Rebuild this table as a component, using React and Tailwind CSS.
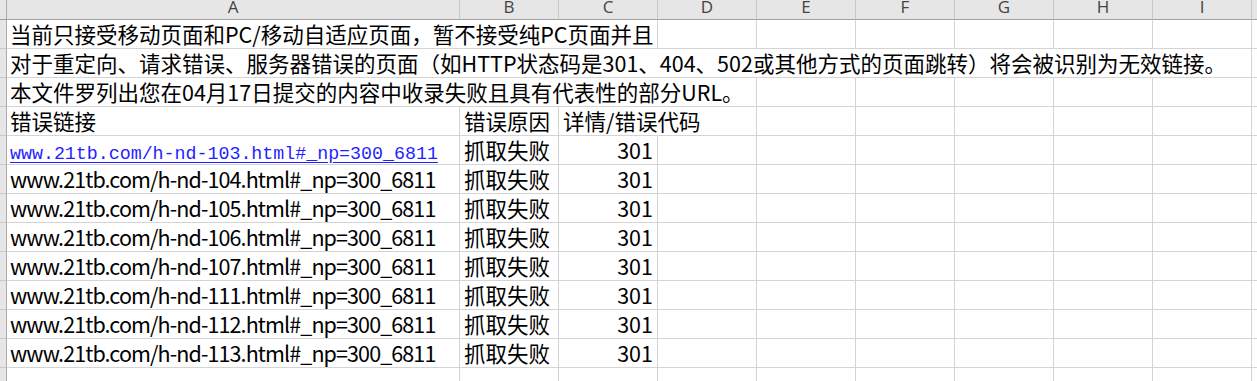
import React from "react";

const COLS = ["A", "B", "C", "D", "E", "F", "G", "H", "I", ""];

const urls = ["104", "105", "106", "107", "111", "112", "113"];

const cellFont = { fontFamily: '"Noto Sans CJK SC", "Liberation Sans", sans-serif' };

const Cell = ({ span = 1, className = "", children }) => {
  const spanCls = {
    1: "",
    2: "col-span-2",
    3: "col-span-3",
    4: "col-span-4",
    9: "col-span-9",
  }[span];
  return (
    <div
      className={`h-[29px] border-r border-b border-[#d4d4d4] overflow-hidden whitespace-nowrap px-[3px] text-[21.5px] leading-[28px] text-black ${spanCls} ${className}`}
      style={cellFont}
    >
      {children}
    </div>
  );
};

const RowHead = () => (
  <div className="h-[29px] bg-[#e6e6e6] border-r border-b border-r-[#ababab] border-b-[#c8c8c8]" />
);

const Blanks = ({ n }) =>
  Array.from({ length: n }).map((_, i) => <Cell key={i} />);

export default function App() {
  return (
    <div className="w-[1257px] h-[381px] overflow-hidden bg-white">
      <div className="grid grid-cols-[7px_453px_repeat(8,99px)_1fr]">
        {/* column headers */}
        <div className="h-[20px] bg-[#e6e6e6] border-r border-b border-r-[#ababab] border-b-[#9f9f9f]" />
        {COLS.map((c, i) => (
          <div
            key={i}
            className="h-[20px] bg-[#e6e6e6] border-r border-b border-r-[#c8c8c8] border-b-[#9f9f9f] flex justify-center text-[17px] leading-[14px] text-[#444]"
            style={{ fontFamily: '"Open Sans", "Liberation Sans", sans-serif' }}
          >
            {c}
          </div>
        ))}

        {/* row 1 */}
        <RowHead />
        <Cell span={3}>当前只接受移动页面和PC/移动自适应页面，暂不接受纯PC页面并且</Cell>
        <Blanks n={7} />

        {/* row 2 */}
        <RowHead />
        <Cell span={9}>
          对于重定向、请求错误、服务器错误的页面（如HTTP状态码是301、404、502或其他方式的页面跳转）将会被识别为无效链接。
        </Cell>
        <Cell />

        {/* row 3 */}
        <RowHead />
        <Cell span={4}>本文件罗列出您在04月17日提交的内容中收录失败且具有代表性的部分URL。</Cell>
        <Blanks n={6} />

        {/* row 4: table header */}
        <RowHead />
        <Cell>错误链接</Cell>
        <Cell className="pl-[4px]">错误原因</Cell>
        <Cell span={2} className="pl-[4px]">详情/错误代码</Cell>
        <Blanks n={6} />

        {/* row 5: hyperlink */}
        <RowHead />
        <Cell>
          <span
            className="text-[18.3px] text-[#1f1fff] underline underline-offset-[3px]"
            style={{ fontFamily: '"Liberation Mono", monospace' }}
          >
            www.21tb.com/h-nd-103.html#_np=300_6811
          </span>
        </Cell>
        <Cell className="pl-[4px]">抓取失败</Cell>
        <Cell className="text-right pr-[4px]">301</Cell>
        <Blanks n={7} />

        {urls.map((u) => (
          <React.Fragment key={u}>
            <RowHead />
            <Cell className="text-[20.5px] tracking-[-0.9px]">{`www.21tb.com/h-nd-${u}.html#_np=300_6811`}</Cell>
            <Cell className="pl-[4px]">抓取失败</Cell>
            <Cell className="text-right pr-[4px]">301</Cell>
            <Blanks n={7} />
          </React.Fragment>
        ))}

        {/* trailing empty row */}
        <RowHead />
        <Blanks n={10} />
      </div>
    </div>
  );
}
